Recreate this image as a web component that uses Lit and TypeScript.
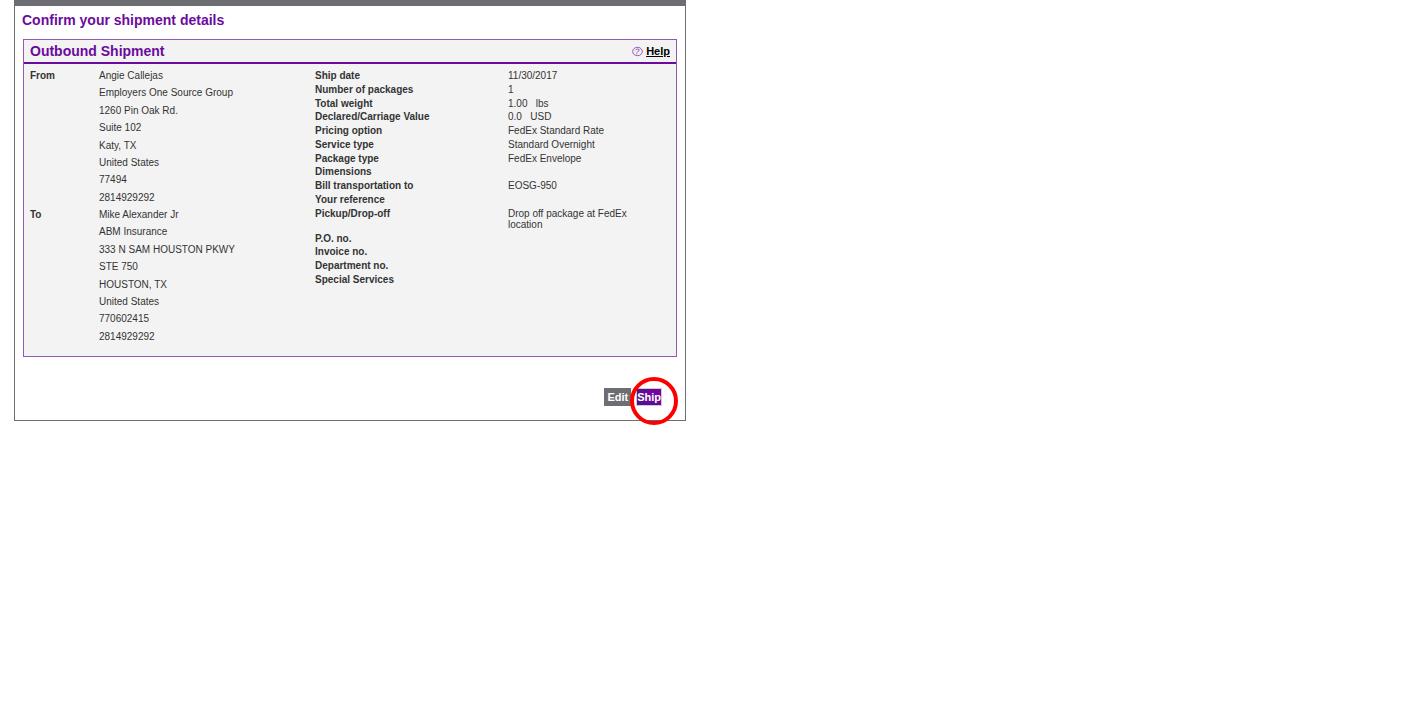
import { LitElement, html, css } from "lit";
import { customElement } from "lit/decorators.js";

interface Address {
  label: string;
  lines: string[];
}

const ADDRESSES: Address[] = [
  {
    label: "From",
    lines: [
      "Angie Callejas",
      "Employers One Source Group",
      "1260 Pin Oak Rd.",
      "Suite 102",
      "Katy, TX",
      "United States",
      "77494",
      "2814929292",
    ],
  },
  {
    label: "To",
    lines: [
      "Mike Alexander Jr",
      "ABM Insurance",
      "333 N SAM HOUSTON PKWY",
      "STE 750",
      "HOUSTON, TX",
      "United States",
      "770602415",
      "2814929292",
    ],
  },
];

const DETAILS: [string, string][] = [
  ["Ship date", "11/30/2017"],
  ["Number of packages", "1"],
  ["Total weight", "1.00\u00a0\u00a0 lbs"],
  ["Declared/Carriage Value", "0.0\u00a0\u00a0 USD"],
  ["Pricing option", "FedEx Standard Rate"],
  ["Service type", "Standard Overnight"],
  ["Package type", "FedEx Envelope"],
  ["Dimensions", ""],
  ["Bill transportation to", "EOSG-950"],
  ["Your reference", ""],
  ["Pickup/Drop-off", "Drop off package at FedEx location"],
  ["P.O. no.", ""],
  ["Invoice no.", ""],
  ["Department no.", ""],
  ["Special Services", ""],
];

@customElement("app-root")
export class AppRoot extends LitElement {
  static styles = css`
    :host {
      display: block;
      min-height: 100vh;
      background: #fff;
      font-family: "Liberation Sans", Arial, sans-serif;
      font-size: 10px;
      line-height: 11px;
      color: #333;
    }
    * {
      box-sizing: border-box;
    }
    .page {
      max-width: 672px;
      margin: 0 14px;
      padding: 5px 8px 14px;
      border: 1px solid #6d6e71;
      border-top-width: 6px;
    }
    h1,
    h2 {
      margin: 0;
      font-size: 14px;
      line-height: 18px;
      color: #6b0a9e;
    }
    h1 {
      padding-bottom: 10px;
      margin-left: -1px;
    }
    .card {
      border: 1px solid #9557b4;
      background: #f3f3f3;
    }
    .head {
      display: flex;
      justify-content: space-between;
      align-items: center;
      padding: 2px 6px;
      border-bottom: 2px solid #6b0a9e;
    }
    .help {
      display: flex;
      align-items: center;
      gap: 3px;
      font-size: 11px;
      font-weight: bold;
      color: #000;
      text-decoration: none;
    }
    .help span {
      text-decoration: underline;
    }
    .body {
      display: grid;
      grid-template-columns: 285fr 355fr;
      align-items: start;
      padding: 3px 6px 11px;
    }
    dl,
    dd {
      margin: 0;
    }
    dt {
      font-weight: bold;
    }
    .addresses {
      display: grid;
      grid-template-columns: 69px 1fr;
      grid-auto-rows: 1fr;
      min-height: 278px;
    }
    .address {
      display: grid;
      grid-template-columns: subgrid;
      grid-column: span 2;
    }
    .lines {
      display: grid;
      grid-auto-rows: 1fr;
    }
    .addresses dt,
    .line {
      line-height: 17px;
    }
    .details {
      display: grid;
      align-content: space-between;
      min-height: 215px;
      margin-top: 3px;
    }
    .detail {
      display: grid;
      grid-template-columns: 193px minmax(0, 130px);
    }
    .actions {
      display: flex;
      justify-content: flex-end;
      align-items: center;
      gap: 5px;
      padding: 31px 15px 0 0;
    }
    button {
      border: 0;
      padding: 0 3px;
      font: bold 11px/18px "Liberation Sans", Arial, sans-serif;
      color: #fff;
      background: #6d6e71;
    }
    .ship-wrap {
      position: relative;
      display: flex;
    }
    .ship {
      padding: 0;
      line-height: 16px;
      border: 1px solid #ccc;
      background: linear-gradient(70deg, #4d148c, #7a00a8);
    }
    .ring {
      position: absolute;
      right: -16px;
      top: -11px;
      width: 48px;
      height: 48px;
      border: 4px solid #f00;
      border-radius: 50%;
      pointer-events: none;
    }
  `;

  render() {
    return html`
      <main class="page">
        <h1>Confirm your shipment details</h1>
        <section class="card">
          <header class="head">
            <h2>Outbound Shipment</h2>
            <a class="help" href="#help">
              <svg width="11" height="11" viewBox="0 0 11 11" fill="none" aria-hidden="true">
                <ellipse cx="5.5" cy="5.5" rx="4.8" ry="4.2" stroke="#9557b4" />
                <path d="M3.6 4.3Q4 3 5.6 3 7.4 3 7.2 4.2 7 5.1 5.8 5.5 5 5.9 4.9 6.6M4.8 7.3V8.4" stroke="#9557b4" />
              </svg>
              <span>Help</span>
            </a>
          </header>
          <div class="body">
            <dl class="addresses">
              ${ADDRESSES.map(
                (a) => html`<div class="address">
                  <dt>${a.label}</dt>
                  <dd class="lines">${a.lines.map((l) => html`<div class="line">${l}</div>`)}</dd>
                </div>`
              )}
            </dl>
            <dl class="details">
              ${DETAILS.map(
                ([k, v]) => html`<div class="detail">
                  <dt>${k}</dt>
                  <dd>${v}</dd>
                </div>`
              )}
            </dl>
          </div>
        </section>
        <div class="actions">
          <button type="button">Edit</button>
          <div class="ship-wrap">
            <button type="button" class="ship">Ship</button>
            <span class="ring"></span>
          </div>
        </div>
      </main>
    `;
  }
}
